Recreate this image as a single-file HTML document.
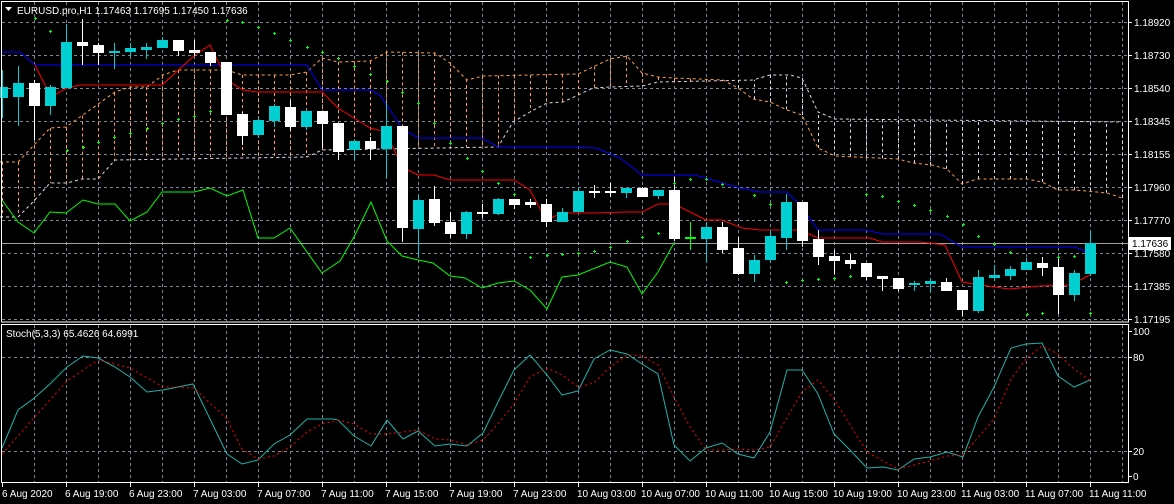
<!DOCTYPE html>
<html><head><meta charset="utf-8"><style>
html,body{margin:0;padding:0;background:#000;}
body{width:1174px;height:504px;overflow:hidden;position:relative;font-family:"Liberation Sans",sans-serif;}
svg{position:absolute;left:0;top:0;}
text{font-family:"Liberation Sans",sans-serif;font-size:10px;fill:#fff;}
</style></head><body>
<svg id="s" width="1174" height="504" viewBox="0 0 1174 504" xmlns="http://www.w3.org/2000/svg">
<rect width="1174" height="504" fill="#000"/>
<g id="grid" stroke="#778899" stroke-dasharray="3 3" stroke-width="1" shape-rendering="crispEdges"></g>
<g id="cloud" stroke-width="1" fill="none" stroke-dasharray="3 3"></g>
<line x1="1" y1="243.5" x2="1128" y2="243.5" stroke="#a0a0a0" stroke-width="1"/>
<g id="lines" fill="none" stroke-width="1"></g>
<g id="candles" shape-rendering="crispEdges"></g>
<g id="sar" stroke="#00ff00" stroke-width="1" shape-rendering="crispEdges"></g>
<g id="stoch" fill="none" stroke-width="1"></g>
<!-- frames -->
<g stroke="#fff" stroke-width="1" fill="none" shape-rendering="crispEdges">
<rect x="1.5" y="1.5" width="1127" height="320.5"/>
<rect x="1.5" y="324.5" width="1127" height="158"/>
</g>
<g id="ticks" stroke="#fff" stroke-width="1" shape-rendering="crispEdges"></g>
<!-- title -->
<polygon points="5,7 12,7 8.5,11" fill="#fff"/>
<text x="17" y="14" font-size="10.5">EURUSD.pro,H1  1.17463 1.17695 1.17450 1.17636</text>
<text x="6" y="337">Stoch(5,3,3) 65.4626 64.6991</text>
<!-- price axis -->
<text x="1134" y="26">1.18920</text>
<text x="1134" y="59">1.18730</text>
<text x="1134" y="92">1.18540</text>
<text x="1134" y="125">1.18345</text>
<text x="1134" y="158">1.18155</text>
<text x="1134" y="191">1.17960</text>
<text x="1134" y="224">1.17770</text>
<text x="1134" y="257">1.17580</text>
<text x="1134" y="290">1.17385</text>
<text x="1134" y="323">1.17195</text>
<rect x="1129" y="237" width="42" height="13" fill="#fff"/>
<text x="1132" y="247" style="fill:#000">1.17636</text>
<text x="1133" y="335">100</text>
<text x="1133" y="361">80</text>
<text x="1133" y="455">20</text>
<text x="1133" y="480">0</text>
<!-- time axis -->
<g>
<text x="2" y="497">6 Aug 2020</text>
<text x="65" y="497">6 Aug 19:00</text>
<text x="129" y="497">6 Aug 23:00</text>
<text x="193" y="497">7 Aug 03:00</text>
<text x="257" y="497">7 Aug 07:00</text>
<text x="321" y="497">7 Aug 11:00</text>
<text x="385" y="497">7 Aug 15:00</text>
<text x="449" y="497">7 Aug 19:00</text>
<text x="513" y="497">7 Aug 23:00</text>
<text x="577" y="497">10 Aug 03:00</text>
<text x="641" y="497">10 Aug 07:00</text>
<text x="705" y="497">10 Aug 11:00</text>
<text x="769" y="497">10 Aug 15:00</text>
<text x="833" y="497">10 Aug 19:00</text>
<text x="897" y="497">10 Aug 23:00</text>
<text x="961" y="497">11 Aug 03:00</text>
<text x="1025" y="497">11 Aug 07:00</text>
<text x="1089" y="497">11 Aug 11:00</text>
</g>
</svg>
<script>
var NS="http://www.w3.org/2000/svg";
function el(p,t,a){var e=document.createElementNS(NS,t);for(var k in a)e.setAttribute(k,a[k]);document.getElementById(p).appendChild(e);return e;}
// grid
for(var x=34;x<=1122;x+=32){el("grid","line",{x1:x+.5,y1:2,x2:x+.5,y2:321});el("grid","line",{x1:x+.5,y1:325,x2:x+.5,y2:482});}
for(var y=22;y<=319;y+=33){el("grid","line",{x1:2,y1:y+.5,x2:1128,y2:y+.5});}
[357,451].forEach(function(y){el("grid","line",{x1:2,y1:y+.5,x2:1128,y2:y+.5});});
// ticks
for(var i=0;i<10;i++){var y=22+33*i;el("ticks","line",{x1:1128,y1:y+.5,x2:1132,y2:y+.5});}
[331,357,451,476].forEach(function(y){el("ticks","line",{x1:1128,y1:y+.5,x2:1132,y2:y+.5});});
for(var x=2;x<=1090;x+=64){el("ticks","line",{x1:x+.5,y1:482,x2:x+.5,y2:487});}
function pts(a){return a.map(function(p){return p[0]+","+p[1]}).join(" ");}
function interp(a,x){for(var i=0;i<a.length-1;i++){if(x>=a[i][0]&&x<=a[i+1][0]){var t=(x-a[i][0])/((a[i+1][0]-a[i][0])||1);return a[i][1]+t*(a[i+1][1]-a[i][1]);}}return null;}
// cloud
var A=[[0,162],[18,162],[20,160],[50,128],[66,127],[115,92],[130,87],[147,87],[163,75],[178,70],[227,70],[242,75],[290,75],[307,72],[322,58],[338,62],[370,61],[387,52],[435,53],[450,63],[467,80],[483,76],[578,74],[593,67],[610,59],[627,56],[642,73],[658,77],[673,78],[723,80],[738,88],[753,99],[770,102],[787,110],[802,115],[818,148],[835,156],[898,159],[913,163],[932,165],[947,169],[962,184],[977,179],[1027,179],[1042,182],[1058,190],[1075,190],[1107,193],[1122,198]];
var B=[[0,217],[18,217],[33,202],[50,183],[67,183],[82,179],[98,179],[115,160],[307,157],[322,150],[498,147],[513,122],[530,112],[547,103],[563,102],[593,88],[610,87],[642,86],[658,82],[753,80],[770,75],[790,75],[802,78],[818,112],[835,119],[1122,122]];
for(var x=2;x<=1122;x+=16){var a=interp(A,x),b=interp(B,x);if(a==null||b==null)continue;var c=a<b?"#ff9f4a":"#e8d4e8";el("cloud","line",{x1:x+.5,y1:a,x2:x+.5,y2:b,stroke:c});}
el("cloud","polyline",{points:pts(A),stroke:"#ff9f4a"});
el("cloud","polyline",{points:pts(B),stroke:"#e8d4e8"});
// lines
var blue=[[2,52],[20,52],[35,65],[307,65],[322,90],[370,90],[380,95],[402,128],[418,138],[482,138],[498,147],[572,147],[596,148],[620,158],[642,175],[695,175],[740,188],[760,192],[787,192],[800,205],[818,230],[866,230],[882,234],[940,234],[962,247],[1075,247],[1090,253]];
var red=[[35,65],[51,97],[67,88],[80,85],[162,85],[195,55],[210,45],[227,80],[243,90],[258,92],[322,92],[338,108],[354,118],[370,128],[386,132],[402,167],[418,175],[434,175],[450,180],[514,180],[530,190],[546,220],[562,213],[594,213],[626,212],[642,212],[658,204],[674,204],[706,220],[722,220],[742,228],[760,230],[800,230],[818,238],[870,238],[882,242],[920,242],[945,245],[962,282],[994,287],[1010,289],[1040,286],[1070,285],[1090,275]];
var green=[[2,200],[18,222],[34,233],[50,212],[66,213],[83,200],[98,204],[115,204],[130,221],[147,212],[162,192],[194,192],[210,188],[227,196],[243,190],[258,238],[274,238],[290,228],[322,273],[340,261],[354,237],[371,202],[387,241],[402,256],[418,260],[433,263],[450,276],[465,278],[482,288],[498,283],[514,281],[530,290],[547,309],[562,277],[578,275],[610,262],[627,267],[642,294],[658,272],[674,243]];
el("lines","polyline",{points:pts(blue),stroke:"#0000ff"});
el("lines","polyline",{points:pts(red),stroke:"#ff0000"});
el("lines","polyline",{points:pts(green),stroke:"#00ff00"});
// candles: [k, bodyTop, bodyBottom, high, low, color]
var C=[[0,87,98,70,118,"c"],[1,83,97,66,126,"c"],[2,83,106,80,140,"w"],[3,87,106,85,115,"c"],[4,42,88,24,88,"c"],[5,42,46,19,65,"w"],[6,45,53,43,65,"w"],[7,51,53,43,69,"c"],[8,48,52,43,56,"c"],[9,47,50,43,59,"c"],[10,40,48,37,48,"c"],[11,40,51,40,56,"w"],[12,50,53,40,56,"w"],[13,52,63,52,66,"w"],[14,62,115,62,115,"w"],[15,114,136,112,145,"w"],[16,120,135,118,138,"c"],[17,106,121,104,127,"c"],[18,107,127,100,130,"w"],[19,111,127,109,130,"c"],[20,111,124,111,148,"w"],[21,123,152,123,160,"w"],[22,141,150,139,160,"c"],[23,141,149,137,160,"w"],[24,126,149,103,178,"c"],[25,126,228,126,242,"w"],[26,200,229,195,258,"c"],[27,199,223,186,226,"w"],[28,222,234,212,238,"w"],[29,212,234,211,239,"c"],[30,212,214,204,218,"w"],[31,199,214,198,215,"c"],[32,199,205,199,209,"w"],[33,202,205,199,208,"w"],[34,204,222,199,227,"w"],[35,212,222,208,222,"c"],[36,191,212,188,212,"c"],[37,191,193,185,198,"w"],[38,191,193,183,197,"w"],[39,188,193,188,198,"c"],[40,188,197,187,197,"w"],[41,190,196,190,199,"c"],[42,190,239,177,241,"w"],[43,237,239,222,250,"g"],[44,227,239,222,262,"c"],[45,227,250,222,253,"w"],[46,248,274,237,275,"w"],[47,260,274,255,282,"c"],[48,236,260,230,263,"c"],[49,202,238,194,250,"c"],[50,202,241,202,247,"w"],[51,239,257,230,265,"w"],[52,256,261,250,274,"w"],[53,260,264,254,269,"w"],[54,263,277,263,280,"w"],[55,276,279,276,291,"w"],[56,278,289,278,291,"w"],[57,283,285,281,291,"c"],[58,281,284,278,292,"c"],[59,282,291,278,291,"w"],[60,290,310,290,316,"w"],[61,277,311,270,313,"c"],[62,275,278,265,281,"c"],[63,269,276,266,280,"c"],[64,262,270,258,270,"c"],[65,263,268,257,276,"w"],[66,267,295,257,314,"w"],[67,273,295,270,301,"c"],[68,243,274,231,276,"c"]];
var col={c:"#00ced1",w:"#ffffff",g:"#00ff00"};
C.forEach(function(d){var x=2+16*d[0],f=col[d[5]];
el("candles","rect",{x:x,y:d[3],width:1,height:Math.max(1,d[4]-d[3]),fill:f});
var h=d[2]-d[1];if(h<2)h=2;
el("candles","rect",{x:x-5,y:d[1],width:11,height:h,fill:f});});
// SAR
var S=[[35,18],[50,31],[67,150],[83,147],[98,142],[114,137],[130,133],[147,128],[162,123],[178,119],[194,116],[210,111],[227,20],[242,22],[258,27],[274,33],[290,40],[307,47],[322,52],[338,58],[354,66],[370,74],[387,81],[402,92],[418,103],[434,123],[450,143],[467,158],[482,171],[498,183],[514,194],[530,257],[547,255],[562,254],[578,253],[594,251],[610,247],[627,241],[642,237],[658,233],[674,183],[690,179],[706,179],[722,184],[754,195],[770,204],[786,282],[802,280],[818,279],[834,278],[850,276],[866,194],[882,196],[898,201],[914,205],[930,210],[947,216],[963,224],[978,236],[994,244],[1010,252],[1027,314],[1042,313],[1058,257],[1074,256],[1090,313]];
S.forEach(function(p){var x=p[0],y=p[1];el("sar","line",{x1:x-1,y1:y+.5,x2:x+2,y2:y+.5});el("sar","line",{x1:x+.5,y1:y-1,x2:x+.5,y2:y+2});});
// stochastic
var M=[[2,448],[18,410],[33,399],[50,384],[67,367],[83,356],[98,358],[115,367],[130,377],[147,392],[163,390],[193,384],[210,419],[227,454],[242,464],[258,460],[274,444],[290,435],[307,419],[333,419],[338,420],[354,436],[371,446],[387,420],[403,439],[418,431],[435,446],[450,444],[467,446],[483,433],[498,402],[514,370],[530,355],[547,375],[562,395],[578,391],[594,359],[610,350],[627,354],[642,364],[658,374],[674,445],[690,461],[706,448],[722,443],[738,454],[754,458],[770,432],[787,370],[802,370],[818,394],[834,434],[850,450],[867,468],[883,467],[898,470],[914,459],[930,457],[947,452],[963,457],[978,417],[994,387],[1011,348],[1026,344],[1042,343],[1058,376],[1074,387],[1090,380]];
var G=[[2,454],[33,419],[67,381],[98,360],[130,368],[163,387],[194,388],[227,419],[242,449],[258,459],[274,456],[290,447],[307,432],[322,424],[338,420],[354,424],[371,434],[387,434],[418,430],[435,439],[450,440],[467,445],[483,440],[498,424],[514,404],[530,377],[547,368],[562,375],[578,387],[594,383],[610,367],[627,355],[642,356],[658,365],[674,397],[690,427],[706,450],[722,450],[738,449],[754,450],[770,447],[802,392],[818,380],[834,399],[867,452],[898,469],[930,461],[947,456],[963,455],[994,419],[1011,379],[1026,359],[1042,346],[1058,354],[1074,369],[1090,380]];
el("stoch","polyline",{points:pts(M),stroke:"#20b2aa"});
el("stoch","polyline",{points:pts(G),stroke:"#ff0000","stroke-dasharray":"2 3"});
</script>
</body></html>
